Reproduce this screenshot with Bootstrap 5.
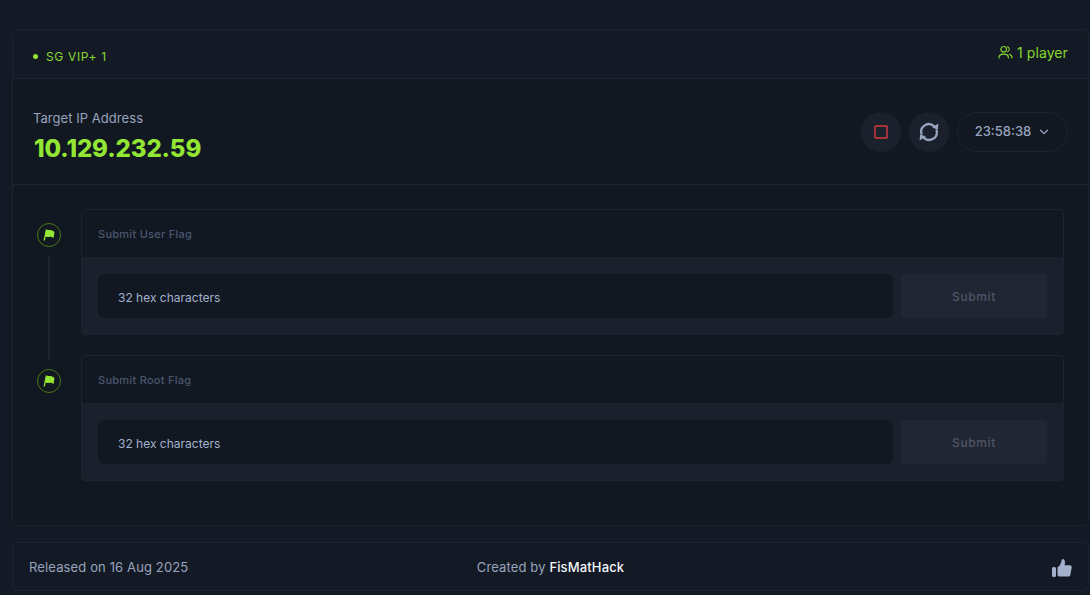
<!DOCTYPE html>
<html lang="en">
<head>
  <meta charset="UTF-8" />
  <meta name="viewport" content="width=device-width, initial-scale=1" />
  <title>Machine</title>
  <link href="https://cdn.jsdelivr.net/npm/bootstrap@5.3.0/dist/css/bootstrap.min.css" rel="stylesheet">
  <style>
    html, body { height: 100%; }
    body { background: #141a25; font-family: Inter, "Liberation Sans", sans-serif; color: #a4b1cd; overflow: hidden; }
    .page-wrap { padding: 29px 1px 0 12px; }
    .machine-box { background: #111821; border: 1px solid #1d2431; border-radius: 6px; height: 497px; }
    .machine-head { height: 49px; background: #141a25; border-bottom: 1px solid #1d2431; border-radius: 6px 6px 0 0; padding: 0 20px; }
    .vpn-name { font-size: 12px; letter-spacing: .65px; margin-top: 5px; color: #86d82e; }
    .vpn-dot { width: 5px; height: 5px; background: #93e633; border-radius: 50%; margin-right: 8px; }
    .player-count { font-size: 14px; letter-spacing: .1px; margin-top: -3px; color: #86d82e; }
    .target-row { height: 106px; border-bottom: 1px solid #1d2431; padding: 0 20px; }
    .target-info { padding-top: 11px; }
    .target-label { font-size: 13px; line-height: 16px; color: #98a4bd; margin-bottom: 8px; letter-spacing: .05px; }
    .target-ip { font-size: 24px; line-height: 30px; font-weight: 800; color: #93e633; letter-spacing: -.1px; margin-left: 1px; }
    .round-btn { width: 40px; height: 40px; border-radius: 50%; background: #1a202c; border: 0; padding: 0; }
    .timer-pill { width: 111px; height: 40px; border-radius: 20px; background: transparent; border: 1px solid #1d2431; color: #98a4bd; font-size: 13px; font-weight: 500; padding: 0 1px 0 0; }
    .flags-area { padding: 24px 24px 0 24px; }
    .flag-row { margin-bottom: 20px; }
    .flag-rail { width: 44px; flex: none; position: relative; padding-top: 14px; }
    .flag-circle { width: 24px; height: 24px; border: 1px solid #4a7a14; border-radius: 50%; background: #111821; }
    .rail-line { position: absolute; left: 11px; top: 46px; width: 2px; height: 105px; background: #1d2431; }
    .flag-box { border: 1px solid #1d2431; border-radius: 4px; height: 126px; overflow: hidden; }
    .flag-title { height: 47px; padding: 2px 16px 0; font-size: 11px; font-weight: 500; letter-spacing: .27px; color: #4a566e; }
    .flag-body { height: 77px; background: #1a202c; padding: 17px 16px 0; gap: 8px; }
    .hex-input { height: 44px; background: #111821; border-radius: 6px; padding: 2px 20px 0; font-size: 12px; color: #98a4bd; }
    .hex-input::placeholder { color: #a4b1cd; opacity: 1; }
    .flag-submit { width: 146px; height: 44px; flex: none; background: #212632; border: 0; border-radius: 4px; font-size: 12px; font-weight: 500; color: #4d5669; padding: 2px 0 0; letter-spacing: .6px; }
    .foot-box { margin-top: 16px; height: 49px; border: 1px solid #1d2431; border-radius: 6px; padding: 2px 16px 0; font-size: 13px; letter-spacing: .13px; color: #98a4bd; }
    .foot-side { flex: 1 1 0; }
    .foot-author { color: #f2f5fa; font-weight: 500; }
  </style>
</head>
<body>

  <div class="page-wrap">
    <div class="machine-box">
      <div class="machine-head d-flex align-items-center justify-content-between">
        <div class="vpn-name d-flex align-items-center"><span class="vpn-dot"></span>SG VIP+ 1</div>
        <div class="player-count d-flex align-items-center gap-1">
          <svg width="15" height="15" viewBox="0 0 15 15" fill="none" stroke="#86d82e" stroke-width="1.1">
            <circle cx="5.7" cy="4.3" r="2.8"/>
            <path d="M1 13.5v-.8c0-2.2 1.7-3.6 4.7-3.6s4.7 1.4 4.7 3.6v.8"/>
            <path d="M9.2 1.6a2.8 2.8 0 0 1 0 5.4M11 9.3c1.9.4 3 1.6 3 3.4v.8"/>
          </svg>
          1 player
        </div>
      </div>

      <div class="target-row d-flex align-items-center justify-content-between">
        <div class="target-info">
          <div class="target-label">Target IP Address</div>
          <div class="target-ip">10.129.232.59</div>
        </div>
        <div class="d-flex align-items-center gap-2">
          <button class="round-btn d-flex align-items-center justify-content-center" type="button" aria-label="Stop">
            <svg width="14" height="14" viewBox="0 0 14 14"><rect x="1" y="1" width="12" height="12" rx=".5" fill="none" stroke="#d83a3a" stroke-width="1.4"/></svg>
          </button>
          <button class="round-btn d-flex align-items-center justify-content-center" type="button" aria-label="Reset">
            <svg width="20" height="20" viewBox="0 0 20 20" fill="none" stroke="#98a4bd" stroke-width="2.3" stroke-linecap="round">
              <path d="M2.4 11.5A7.6 7.6 0 0 1 15 4.2"/>
              <path d="M17.6 8.5A7.6 7.6 0 0 1 5 15.8"/>
              <path d="M19.4 1.4l-.5 6.4-5.8-2.2z" fill="#98a4bd" stroke="none"/>
              <path d="M.6 18.6l.5-6.4 5.8 2.2z" fill="#98a4bd" stroke="none"/>
            </svg>
          </button>
          <button class="timer-pill d-flex align-items-center justify-content-center gap-2" type="button">
            23:58:38
            <svg width="10" height="6" viewBox="0 0 10 6" fill="none" stroke="#98a4bd" stroke-width="1.3" stroke-linecap="round" stroke-linejoin="round"><path d="M1.5 1.2 5 4.6l3.5-3.4"/></svg>
          </button>
        </div>
      </div>

      <div class="flags-area">
        <div class="flag-row d-flex">
          <div class="flag-rail">
            <div class="flag-circle d-flex align-items-center justify-content-center">
              <svg width="12" height="12" viewBox="0 0 12 12" fill="#93e633"><path d="M2.8.2c1.3.8 2.3.8 3.5.7 1.6-.1 3.4.5 5.2 2L10.6 9c-1.7-1.1-3-1.3-4.3-1.1-1.4.2-2.5.1-3.7-.4L2 11.6H.6z"/></svg>
            </div>
            <div class="rail-line"></div>
          </div>
          <div class="flag-box flex-grow-1">
            <div class="flag-title d-flex align-items-center">Submit User Flag</div>
            <div class="flag-body d-flex">
              <input class="hex-input form-control border-0 shadow-none" type="text" placeholder="32 hex characters">
              <button class="flag-submit" type="button">Submit</button>
            </div>
          </div>
        </div>
        <div class="flag-row d-flex">
          <div class="flag-rail">
            <div class="flag-circle d-flex align-items-center justify-content-center">
              <svg width="12" height="12" viewBox="0 0 12 12" fill="#93e633"><path d="M2.8.2c1.3.8 2.3.8 3.5.7 1.6-.1 3.4.5 5.2 2L10.6 9c-1.7-1.1-3-1.3-4.3-1.1-1.4.2-2.5.1-3.7-.4L2 11.6H.6z"/></svg>
            </div>
          </div>
          <div class="flag-box flex-grow-1">
            <div class="flag-title d-flex align-items-center">Submit Root Flag</div>
            <div class="flag-body d-flex">
              <input class="hex-input form-control border-0 shadow-none" type="text" placeholder="32 hex characters">
              <button class="flag-submit" type="button">Submit</button>
            </div>
          </div>
        </div>
      </div>
    </div>

    <div class="foot-box d-flex align-items-center">
      <div class="foot-side">Released on 16 Aug 2025</div>
      <div>Created by <span class="foot-author">FisMatHack</span></div>
      <div class="foot-side d-flex justify-content-end">
        <svg width="20" height="20" viewBox="0 0 20 20" fill="#a4b1cd"><rect x="0" y="9" width="4" height="10" rx="1.5"/><path d="M5.5 9.5c1.6-1.2 3.4-3.5 4-6.6.1-1.2.5-1.9 1.3-1.9 1.4 0 2.2 1.4 2.2 3.2 0 1-.2 2-.5 3h5.2c1.4 0 2.3 1 2 2.3l-1.3 7.2c-.2 1-1 1.8-2.2 1.8H8c-1.4 0-2.5-.6-2.5-1.8z"/></svg>
      </div>
    </div>
  </div>

  <script src="https://cdn.jsdelivr.net/npm/bootstrap@5.3.0/dist/js/bootstrap.bundle.min.js"></script>
</body>
</html>
